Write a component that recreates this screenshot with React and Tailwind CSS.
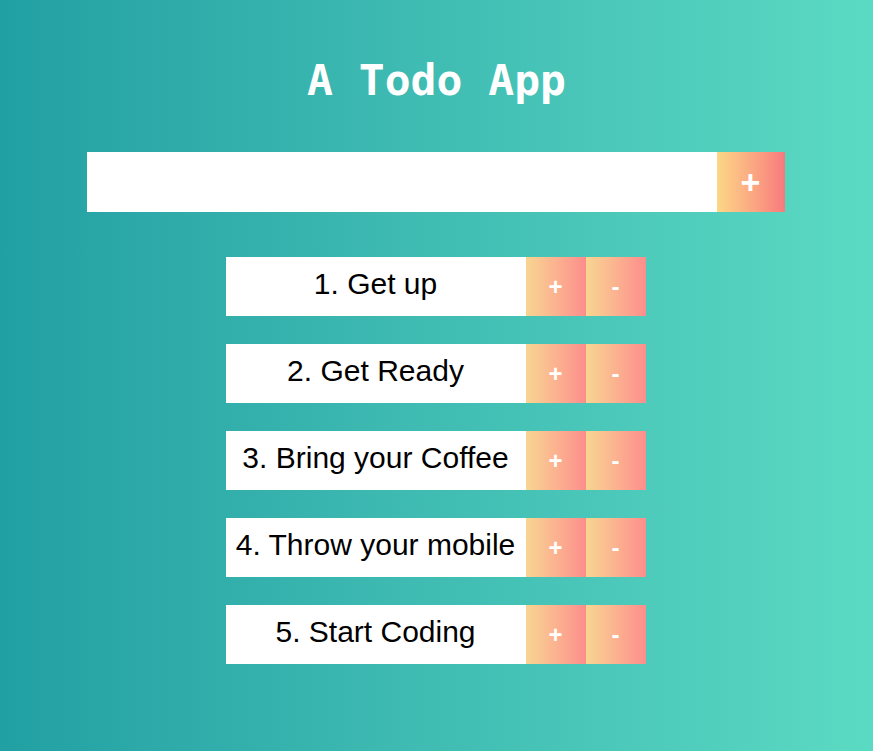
import { useState } from "react";

const initial = ["Get up", "Get Ready", "Bring your Coffee", "Throw your mobile", "Start Coding"];

export default function App() {
    const [todos, setTodos] = useState(initial);
    const [text, setText] = useState("");

    const add = () => {
        if (!text.trim()) return;
        setTodos([...todos, text.trim()]);
        setText("");
    };

    return (
        <div className="min-h-screen w-full bg-gradient-to-r from-[#21a0a3] to-[#5bdac3] pt-[54px]" style={{ minHeight: 751 }}>
            <h1 className="text-center text-[43px] leading-[52px] font-bold text-white" style={{ fontFamily: '"DejaVu Sans Mono", monospace' }}>
                A Todo App
            </h1>
            <div className="mx-auto mt-[46px] flex h-[60px] w-[698px] -translate-x-[1px]">
                <input
                    value={text}
                    onChange={(e) => setText(e.target.value)}
                    className="h-full flex-1 bg-white px-3 text-[24px] outline-none"
                    style={{ fontFamily: '"Liberation Sans", Arial, sans-serif' }}
                />
                <button onClick={add} className="flex h-full w-[68px] items-center justify-center bg-gradient-to-r from-[#fbd786] to-[#f7797d] text-[34px] font-bold text-white" style={{ fontFamily: '"Liberation Sans", Arial, sans-serif' }}>
                    +
                </button>
            </div>
            <ul className="mx-auto mt-[45px] flex w-[420px] -translate-x-[1px] flex-col gap-[28px]" style={{ fontFamily: '"Liberation Sans", Arial, sans-serif' }}>
                {todos.map((t, i) => (
                    <li key={i} className="flex h-[59px]">
                        <div className="flex w-[300px] items-center justify-center bg-white pb-[7px] text-[30px] text-black whitespace-nowrap">
                            {i + 1}. {t}
                        </div>
                        <button className="flex w-[60px] items-center justify-center bg-gradient-to-r from-[#f7d591] to-[#fc8d8d] text-[24px] font-bold text-white">
                            +
                        </button>
                        <button
                            onClick={() => setTodos(todos.filter((_, j) => j !== i))}
                            className="flex w-[60px] items-center justify-center bg-gradient-to-r from-[#f7d591] to-[#fc8d8d] text-[24px] font-bold text-white"
                        >
                            -
                        </button>
                    </li>
                ))}
            </ul>
        </div>
    );
}
